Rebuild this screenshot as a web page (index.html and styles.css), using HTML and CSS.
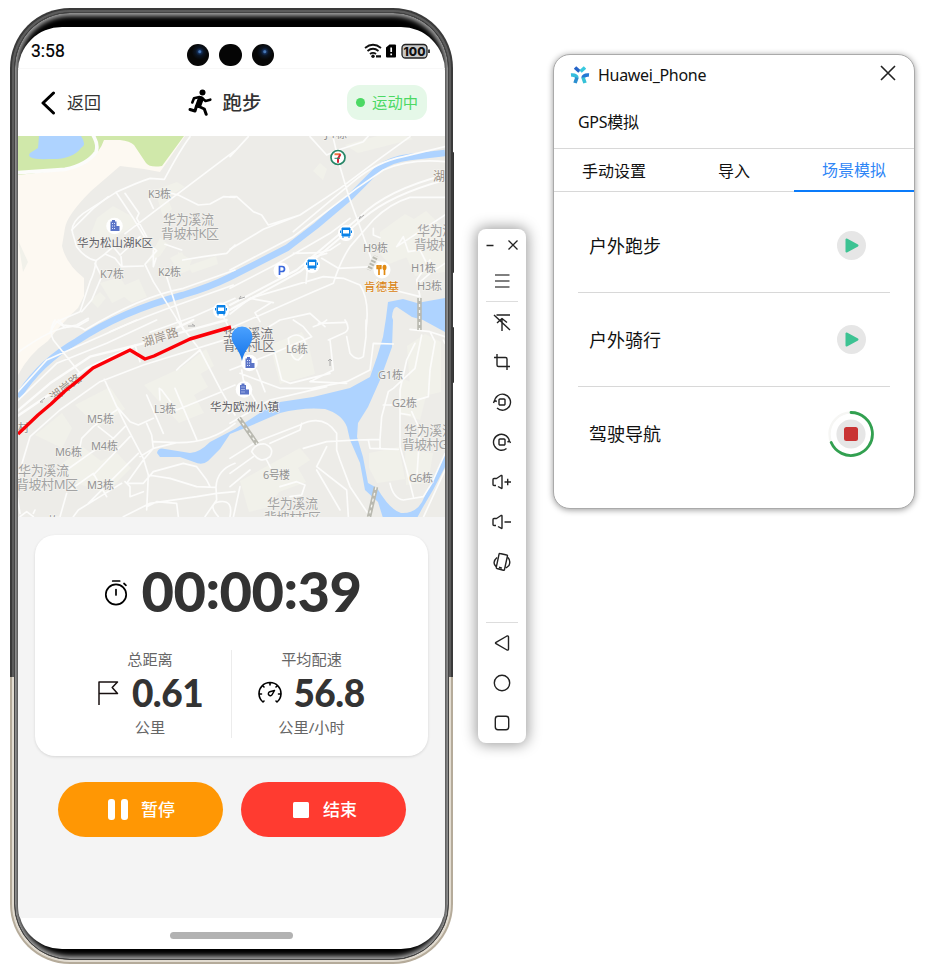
FILE: index.html
```html
<!DOCTYPE html>
<html lang="zh-CN">
<head>
<meta charset="utf-8">
<title>Huawei_Phone</title>
<link rel="stylesheet" href="styles.css">
</head>
<body>
<main class="desk">
  <section class="phone">
    <i class="key key-volume"></i><i class="key key-power"></i>
    <div class="rim"><div class="rim-inner"><div class="bezel">
      <div class="screen">
        <header class="status">
          <span class="clock">3:58</span>
          <span class="cams"><i class="cam lens"></i><i class="cam"></i><i class="cam lens"></i></span>
          <svg class="signals" width="68" height="18" viewBox="0 0 68 18">
            <g fill="none" stroke="#111" stroke-width="1.800">
              <path d="M1 6Q9-.500 17 6M3.500 9Q9 4.500 14.500 9M6 12Q9 9.700 12 12"/>
              <path d="M12 14.300h5" stroke-width="2.200"/>
            </g>
            <circle cx="9" cy="14.300" r="1.700" fill="#111"/>
            <path d="M25.500 2.500h5.500q1 0 1 1v11q0 1-1 1h-8q-1 0-1-1V5.500z" fill="#000"/>
            <path d="M27.200 5.500v4.500M27.200 11.500v1.700" stroke="#fff" stroke-width="1.700"/>
            <rect x="38" y="2.500" width="25" height="13.500" rx="3.500" fill="#c9c9c9" stroke="#222" stroke-width="1.300"/>
            <path d="M65 7.500v3.500" stroke="#222" stroke-width="1.700"/>
            <text x="50.500" y="13.500" class="battery" text-anchor="middle">100</text>
          </svg>
        </header>
        <nav class="nav">
          <span class="back"><svg width="15" height="24" viewBox="0 0 15 24"><path d="M12.500 2L2 12l10.500 10" fill="none" stroke="#000" stroke-width="3" stroke-linecap="round" stroke-linejoin="round"/></svg><span>返回</span></span>
          <span class="title"><svg width="24" height="27" viewBox="0 0 24 27"><circle cx="14.500" cy="3.500" r="3" fill="#000"/><g fill="none" stroke="#000" stroke-linecap="round" stroke-linejoin="round"><path d="M4.300 13.500L6 9.300l5.500-1.300" stroke-width="2.600"/><path d="M14 9L17.500 12l4.800-1.300" stroke-width="2.600"/><path d="M12.700 10L10.500 16" stroke-width="6"/><path d="M11 17.500l5.300 2.500 1.900 5.300" stroke-width="3"/><path d="M8.500 17L7 22 2 20.500" stroke-width="3"/></g></svg><span>跑步</span></span>
          <span class="badge"><i></i><span>运动中</span></span>
        </nav>
        <svg class="map" width="427" height="381" viewBox="18 136 427 381">
          <rect x="18" y="136" width="427" height="381" fill="#edece8"/>
          <path d="M18 136H185L160 172Q140 168 120 166L91 191Q67 215 65 228L62 246Q66 264 84 278V296L78 308Q60 325 48 341Q30 353 18 375Z" fill="#fdf9f2"/>
          <path d="M18 136H184L162 166Q150 168 146 163L134 145Q130 141 120 140L104 140Q96 164 62 170L18 175Z" fill="#d0e8aa"/>
          <path d="M39 136H81Q87 145 81 148Q72 160 49 159Q25 160 30 153L38 148Z" fill="#aed3ff"/>
          <g fill="#f1f1ea">
            <path d="M155 190l22-8 8 5-18 10 5 12-9 8zM97 218l16-12 18 10 6 8-20 12-16 8-12-5zM160 238l8 6-8 12-14 8zM178 252l14 8-4 10-10-6zM188 266l28-10 2 8-26 9zM100 283l20-6 5 8 14-6 8 18-15 6-8-6-12 6zM18 240l10 22-5 10zM90 300l10-8 6 6-8 10zM170 258l12-6 8 18-10 4z"/>
            <path d="M320 163l7 6-4 11-10-9zM345 145l50-14 18 8-55 14zM380 232l25-18 9 5 12-8 19 18v35l-30-10-26 10-9-10zM403 250l25-8 17 10v20l-30 4z"/>
            <path d="M144 385l50-23 14 25-14 8 10 18-25 10zM75 405l35-18 15 22-27 18zM35 435l27-22 10 15-10 20zM58 467l25-20 18 14 16-8 14 15-25 25-30-10zM182 367l24-18 8 17-24 14zM270 345l32-13 7 14 6 28-35 10z"/>
            <path d="M369 453l30-6 6 32-28 4-8-15zM240 481l60-33 10 12-12 8 8 14-27 10-10 15-20 5zM407 346l18-12 16 8v50l-30 7zM400 378l28 10-8 32-20-6zM405 450l28 3-5 30-22 2z"/>
          </g>
          <path d="M18 397Q40 362 77 341C110 319 145 305 183 295Q210 287 230 277L287 248 317 225 350 197 378 169Q391 159 410 157L445 153" fill="none" stroke="#aed3ff" stroke-width="6.500"/>
          <path d="M157 453Q158 447 165 449L190 453Q199 453 210 442L235 429 263 411 280 402 313 397 350 388 370 377 377 357 383 337 386 318 388 302 403 299 417 303 445 298V332L423 320 412 317 397 307Q393 306 392 317L393 320 392 347 380 380 368 407 358 423 357 437 363 457 368 483 377 488Q390 510 401 513 415 514 422 502L437 470 445 452V467L433 490 423 507 417 518H383L378 502 365 490 360 463 350 440 347 427Q342 414 325 409Q303 407 280 413L250 426 230 434 220 449 208 461Q202 466 194 462L180 457H160Z" fill="#aed3ff"/>
          <g fill="none" stroke="#fcfcfb" stroke-linejoin="round" stroke-linecap="round">
            <g transform="translate(10 130) scale(.33333)" stroke-width="5">
              <path d="M20 128L165 118Q230 105 258 66Q266 45 250 17" stroke-width="11"/>
              <path d="M540 20Q510 60 463 148L420 145Q380 158 318 187L220 250Q180 280 188 310L200 350Q225 385 258 392Q255 425 240 455L210 545L140 575L118 610"/>
              <path d="M675 62L345 311M318 187L367 260 416 342 440 362 405 403 430 455 515 590M416 205L430 235M345 190L387 250 380 265M462 185L505 195 565 225 600 222 640 200 675 202M465 343L515 360M518 390L580 380 650 370 675 345M430 360V410L438 385M258 392L285 372 315 385 335 410 400 408M285 372L310 350 330 375 390 320M185 300L250 235 295 200M380 265L410 320M255 400L275 440 245 510 215 545M140 575L165 592 200 585 235 565M336 410L333 380"/>
              <path d="M225 600Q390 500 520 475L675 420M20 670Q170 560 225 600M670 465L530 515Q400 560 300 605M675 505L550 560 420 607M470 440L520 600M640 560L660 600"/>
            </g>
            <g transform="translate(230 130) scale(.33333)" stroke-width="5">
              <path d="M0 80L55 20M240 20L290 75 325 60 400 35 415 18M0 200H20L70 245 95 255 115 285 210 255M0 358L100 298 210 255 330 175 450 85 540 20M310 25L330 110 355 195 390 290 425 390 460 400M0 420L190 320 380 175 460 120Q540 85 645 95M0 475L135 405 300 310 360 265M645 50L520 80Q440 95 370 155L190 305M645 202H540Q480 220 430 270L360 350Q330 395 310 460L240 490 0 595M430 295V315L450 323M645 255L500 350 520 320 535 365 570 360 590 400M600 390L560 450 570 500 490 480 440 450M275 385L325 415 430 410M190 370L270 368 300 360 330 340M228 460L235 385 290 370M120 520L75 548 90 575M0 552L60 505 280 440 340 445 390 465Q420 510 408 600M60 505L130 518M645 400L600 430 565 460M85 610L150 570 240 550 285 590M265 580L350 577"/>
              <path d="M0 525L200 420 390 260Q470 180 645 135M0 540L210 425 400 265Q480 195 645 150" stroke-width="6"/>
            </g>
            <g transform="translate(10 320) scale(.33333)" stroke-width="5">
              <path d="M20 275L120 190 240 110 400 70 550 0M20 290L130 215 230 145 380 75 540 30 650 0" stroke-width="7"/>
              <path d="M20 220L110 120 280 45 380 0M20 245L140 130 290 70 440 0M135 0Q115 30 130 60L210 160M145 0L160 15 200 20 235 0M24 470L60 350 150 270 270 185 400 135 675 50M283 178L320 260 350 320 400 415 415 465 410 570M320 260L360 305 385 315 430 295M320 270L290 290 250 320 215 355 210 380M265 320L310 355 345 320M310 355L240 400 170 450M360 350L250 465M385 400L235 550M375 75L390 125M500 0L570 90 635 215 675 285M635 215L500 270 455 210 448 205 450 240M570 90L510 140 500 150M495 205L560 358M410 225L460 340M410 310L425 345 430 385M350 490L400 420 430 385 500 368Q600 370 675 310M430 365L500 368M345 485L360 500 360 530 400 515M350 490L400 490 430 455 520 430 560 440 590 480 600 500M415 465L480 475 560 500 618 502M675 430Q620 450 618 502L620 540 585 590M340 590L420 550 560 530 620 520 675 515M410 560L440 545 500 550 505 590M625 590Q590 550 630 545 670 540 660 590M30 590L50 575 70 590M70 580L75 570M170 520L150 590M190 590L205 570 270 530 335 490M390 410L430 385M20 520L30 580M180 510L250 460 290 530M640 210L675 195M655 280L675 270"/>
            </g>
            <g transform="translate(230 320) scale(.33333)" stroke-width="5">
              <path d="M0 150L130 100 245 50 220 20 190 0M250 20Q280 10 290 0M300 60L310 150 240 185 350 190M30 160L150 205 245 205 350 185 420 150 430 70 490 72M135 100L155 180 180 190 300 160M175 55Q200 35 220 55 240 90 205 120 180 120 175 55M295 60L340 40Q365 30 345 0M408 0V50L400 110Q380 125 360 100L350 50M0 310L120 240 290 200M35 150L40 180 80 250M80 150L105 215M0 415L80 365 210 315Q280 280 320 340V390L330 420 360 500 420 590M220 385L290 365 380 360 450 358 455 290 475 215 490 205 555 145 575 45M540 28L600 35 645 50M600 35L615 65 600 150 595 230M555 70L530 120 510 210M510 210V380L530 450 550 530M415 360L420 385 505 388M450 358V385M460 255H510L595 230M510 280L540 285M545 275L570 330 560 480M480 490Q490 535 520 540L580 530 605 490 645 400M645 450L580 592M290 380L260 440 350 510 355 590M65 395Q75 370 105 372 135 385 120 410 90 435 65 395M120 370L210 330 215 310M110 420L125 450M0 500L60 450M0 460L70 410M150 500L200 485 225 495 215 525 180 530M260 450L330 570M30 500L10 592M640 60L645 70"/>
            </g>
          </g>
          <g fill="none" stroke="#b9b9b0" stroke-width="4.500"><path d="M419.500 298V330M239 418L257 444M376 487L369 517"/><path d="M376 256l-7 14" stroke-width="5"/></g>
          <g fill="none" stroke="#f4f4ef" stroke-width="1.300" stroke-dasharray="3 3"><path d="M419.500 298V330M239 418L257 444M376 487L369 517"/></g>
          <path d="M376 256l-7 14" stroke="#edece8" stroke-width="6" stroke-dasharray="1.500 2"/>
          <path d="M359 219l5-4m-5 4l1.500-3M239 299l6-2m-6 2l2-3M188 326h7m-3-2 3 2M40 402l5-4m-5 4h3M330 366v-7m-2 2 2-2 2 2" stroke="#aaa" fill="none"/>
          <g class="lbl">
            <text x="148" y="198" textLength="23">K3栋</text><text x="100" y="278" textLength="24">K7栋</text><text x="158" y="276" textLength="23">K2栋</text>
            <text x="363" y="252" textLength="25">H9栋</text><text x="411" y="272" textLength="25">H1栋</text><text x="417" y="290" textLength="25">H3栋</text>
            <text x="286" y="353" textLength="22">L6栋</text><text x="154" y="413" textLength="22">L3栋</text><text x="87" y="423" textLength="27">M5栋</text>
            <text x="91" y="450" textLength="27">M4栋</text><text x="55" y="456" textLength="27">M6栋</text><text x="87" y="489" textLength="27">M3栋</text>
            <text x="378" y="379" textLength="25">G1栋</text><text x="392" y="407" textLength="25">G2栋</text><text x="409" y="482" textLength="24">G6栋</text>
            <text x="263" y="479" textLength="27">6号楼</text><text x="325" y="138" textLength="22">J4栋</text>
            <text x="18" y="432">村</text><text x="48" y="525">栋</text>
          </g>
          <g class="area">
            <text x="163" y="224" textLength="51">华为溪流</text><text x="161" y="238" textLength="58">背坡村K区</text>
            <text x="417" y="235" textLength="51">华为溪流</text><text x="414" y="249" textLength="58">背坡村H区</text>
            <text x="18" y="475" textLength="51">华为溪流</text><text x="16" y="489" textLength="62">背坡村M区</text>
            <text x="404" y="435" textLength="51">华为溪流</text><text x="402" y="449" textLength="58">背坡村G区</text>
            <text x="267" y="508" textLength="51">华为溪流</text><text x="264" y="522" textLength="57">背坡村F区</text>
          </g>
          <g class="area strong"><text x="223" y="338" textLength="50">华为溪流</text><text x="223" y="350" textLength="52">背坡村L区</text></g>
          <g class="road"><text transform="translate(144 347) rotate(-18)" textLength="37">湖岸路</text><text transform="translate(54 402) rotate(-38)" textLength="36">湖岸路</text><text x="433" y="181">湖</text></g>
          <path d="M18 434L38 415 51 404 65 391 80 379 93 368 130 350 145 359 154 356 190 339 231 327" fill="none" stroke="#fb0007" stroke-width="3.400" stroke-linejoin="round"/>
          <g class="place"><text x="77" y="247" textLength="76">华为松山湖K区</text><text x="210" y="410.500" textLength="69">华为欧洲小镇</text></g>
          <text x="364" y="290.500" class="food" textLength="35">肯德基</text>
          <defs>
            <g id="bus"><circle r="8" fill="#fff"/><path d="M-4-5h8v8h-8zM-5.500-2.500v2.500M5.500-2.500v2.500M-3 3.500v1.500M3 3.500v1.500" fill="#0b82e8" stroke="#0b82e8" stroke-width="1"/><path d="M-3-3h6v3.500h-6z" fill="#fff"/></g>
            <g id="tower"><circle r="8.300" fill="#fff"/><path d="M-4 5V-4.500h1.500V-6h3v1.500H2V0h3v5z" fill="#5b74c7"/><path d="M-2.500-2.500h1m1 0h1M-2.500 0h1m1 0h1m-3 2.500h1m1 0h1" stroke="#dfe6ff" stroke-width="1.200"/></g>
            <linearGradient id="pinfill" x2="0" y2="1"><stop stop-color="#4aa1ff"/><stop offset="1" stop-color="#1674e8"/></linearGradient>
          </defs>
          <use href="#bus" x="346" y="233"/><use href="#bus" x="312" y="265"/><use href="#bus" x="221" y="310.500"/>
          <use href="#tower" x="114.500" y="226"/><use href="#tower" x="249.500" y="363"/><use href="#tower" x="244" y="389.500"/>
          <circle cx="281.500" cy="270.500" r="8" fill="#fff"/><path d="M279.500 275v-8.500h2.500a2.500 2.500 0 0 1 0 5h-2.500" fill="none" stroke="#3968dc" stroke-width="1.700"/>
          <circle cx="382" cy="270" r="8.500" fill="#fff"/><path d="M379 265v10M377.200 265v3.500h3.600V265M384.500 265.500v9.500" fill="none" stroke="#e28a12" stroke-width="1.700"/><ellipse cx="384.500" cy="267.500" rx="2" ry="2.800" fill="#e28a12"/>
          <circle cx="338" cy="157.500" r="7" fill="#fff" stroke="#278667" stroke-width="1.700"/><path d="M334.500 154.300h6" fill="none" stroke="#ee7440" stroke-width="2"/><path d="M340.500 154.300l-2.500 4.200v4.200" fill="none" stroke="#d42337" stroke-width="2"/><path d="M334.500 158.300h5.500" stroke="#278667" stroke-width="1"/>
          <path d="M242 361C240 350 231.500 344 231.500 337a10.500 10.500 0 0 1 21 0C252.500 344 244 350 242 361Z" fill="url(#pinfill)"/>
        </svg>
        <section class="content">
          <article class="card">
            <div class="timer"><svg width="24" height="27" viewBox="0 0 24 27" fill="none" stroke="#000" stroke-width="1.700" stroke-linecap="round"><circle cx="12" cy="15.500" r="10.200"/><path d="M12 10.500v5.500M8.700 2h7M20 4.500l2 1.800"/></svg><b>00<i>:</i>00<i>:</i>39</b></div>
            <div class="stats">
              <div class="stat"><span>总距离</span><div class="value"><svg width="22" height="26" viewBox="0 0 22 26" fill="none" stroke="#181010" stroke-width="1.500" stroke-linejoin="round"><path d="M2 25V2h18.500l-5.300 5.500 5.300 6H2"/></svg><b>0.61</b></div><span>公里</span></div>
              <div class="stat"><span>平均配速</span><div class="value"><svg width="24" height="24" viewBox="0 0 24 24" fill="none" stroke="#000" stroke-width="1.600" stroke-linecap="round"><path d="M5 21A11 11 0 1 1 19 21M12 1.500v2.500M4.500 4.500l1.500 1.500M19.500 4.500l-1.500 1.500M1.500 13H3.500M22.500 13H20.500M5 21l1-1M19 21l-1-1"/><path d="M16.500 9.500l-4.700 1.300a2 2 0 1 0 2.400 2.700z" stroke-width="1.500" stroke-linejoin="round"/></svg><b>56.8</b></div><span>公里/小时</span></div>
            </div>
          </article>
          <div class="actions">
            <button class="pause"><svg width="20" height="21" viewBox="0 0 20 21" fill="#fff"><rect width="7" height="21" rx="3"/><rect x="13" width="7" height="21" rx="3"/></svg><span>暂停</span></button>
            <button class="stop"><svg width="16" height="16"><rect width="16" height="16" rx="1.500" fill="#fff"/></svg><span>结束</span></button>
          </div>
        </section>
        <footer class="home"><i></i></footer>
      </div>
    </div></div></div>
  </section>

  <aside class="tools">
    <div class="window-buttons"><svg width="8" height="12"><path d="M.500 6.500h7" stroke="#222" stroke-width="1.500"/></svg><svg width="12" height="12"><path d="M1.500 1.500l9 9M10.500 1.500l-9 9" stroke="#222" stroke-width="1.300"/></svg></div>
    <svg class="tool menu" viewBox="-12 -12 24 24"><path d="M-7-6H7.500M-7 0H7.500M-7 6H7.500"/></svg>
    <hr>
    <svg class="tool" viewBox="-12 -12 24 24"><path d="M-5.500-7H8M-8-7L8 8M0-3.500V9M-5 1L0-3.500 5 .500"/></svg>
    <svg class="tool" viewBox="-12 -12 24 24"><path d="M-8-4.500H3.500Q5-4.500 5-3V8M-5-8V3q0 1.500 1.500 1.500H8"/></svg>
    <svg class="tool" viewBox="-12 -12 24 24"><path d="M-7.500 0A8 8 0 1 1-5 6M-8.500 1l1-2.500 2.300 1"/><rect x="-3" y="-3" width="6" height="6" rx="1"/></svg>
    <svg class="tool" viewBox="-12 -12 24 24"><path d="M4.500 6.500A8 8 0 1 1 7.500 0M8.500 1L7.500-1 5.500 0"/><rect x="-3" y="-3" width="6" height="6" rx="1"/></svg>
    <svg class="tool" viewBox="-12 -12 24 24"><path d="M-6 3.500h-2q-1 0-1-1v-5q0-1 1-1h2.500L-1-6.500Q0-6.800 0-6V6Q0 6.800-1 6.200L-4 4.500M2.500 0H9M5.700-3.200v6.400"/></svg>
    <svg class="tool" viewBox="-12 -12 24 24"><path d="M-6 3.500h-2q-1 0-1-1v-5q0-1 1-1h2.500L-1-6.500Q0-6.800 0-6V6Q0 6.800-1 6.200L-4 4.500M2.500 0H9"/></svg>
    <svg class="tool" viewBox="-12 -12 24 24"><path d="M-2-8.500L4.700-7Q5.700-6.800 5.400-5.800L2.500 7.500Q2.300 8.500 1.300 8.200L-5 6.500Q-6 6.200-5.700 5.200L-3-7.700Q-2.800-8.700-2-8.500M-3 5.300l3 .800M-5-4.500Q-9-1-7.500 2.500L-6 4.500M6-4.500Q9-1 7 3.500L4 6"/></svg>
    <hr class="low">
    <svg class="tool" viewBox="-12 -12 24 24"><path d="M-6 .700Q-7 0-6-.700L5-7Q6.500-7.500 6.500-6V6Q6.500 7.500 5 7Z"/></svg>
    <svg class="tool" viewBox="-12 -12 24 24"><circle r="7.700"/></svg>
    <svg class="tool" viewBox="-12 -12 24 24"><rect x="-6.700" y="-6.700" width="13.400" height="13.400" rx="2.700"/></svg>
  </aside>

  <section class="panel">
    <header class="panel-head">
      <svg width="20" height="18" viewBox="0 0 20 18" fill="none" stroke-width="3.600"><path d="M9.500 5.500L5 1.500" stroke="#2564c8"/><path d="M10.500 5.500L15 1.500" stroke="#38c9df"/><path d="M1 9Q6.500 8.500 7 12" stroke="#36bddd"/><path d="M7 11.500L5 17" stroke="#2b8fd0"/><path d="M19 9Q13.500 8.500 13 12" stroke="#2479d4"/><path d="M13 11.500L15 17" stroke="#35c1d7"/></svg>
      <span>Huawei_Phone</span>
      <svg class="close" width="16" height="16"><path d="M1 1l14 14M15 1L1 15" stroke="#222" stroke-width="1.600"/></svg>
    </header>
    <h1>GPS模拟</h1>
    <nav class="tabs"><span>手动设置</span><span>导入</span><span class="active">场景模拟</span></nav>
    <ul>
      <li><span class="name">户外跑步</span><span class="round"><svg width="14" height="15"><path d="M1.500 1.500v12l11-6z" fill="#3dc393" stroke="#3dc393" stroke-width="2" stroke-linejoin="round"/></svg></span></li>
      <li><span class="name">户外骑行</span><span class="round"><svg width="14" height="15"><path d="M1.500 1.500v12l11-6z" fill="#3dc393" stroke="#3dc393" stroke-width="2" stroke-linejoin="round"/></svg></span></li>
      <li><span class="name">驾驶导航</span><svg class="progress" width="46" height="46" viewBox="-23 -23 46 46"><circle r="21.500" fill="none" stroke="#f6f6f4" stroke-width="2.400"/><circle r="14.600" fill="#e6e6e6"/><path d="M0-21.500A21.500 21.500 0 1 1-19.800 8.500" fill="none" stroke="#32a050" stroke-width="2.800" stroke-linecap="round"/><rect x="-7" y="-7" width="14" height="14" rx="2.500" fill="#c93434"/></svg></li>
    </ul>
  </section>
</main>
</body>
</html>
```
FILE: styles.css
```css
* { box-sizing: border-box; }
body { margin: 0; background: #fff; font-family: "Noto Sans", "Noto Sans CJK SC", sans-serif; color: #333; overflow: hidden; }
.desk { display: flex; align-items: flex-start; width: 928px; height: 970px; padding: 8px 0 0 10px; }
svg { display: block; flex: none; }

/* Device */
.phone { position: relative; width: 443px; height: 956px; flex: none; }
.key { position: absolute; right: -1px; width: 2px; background: #333; border-radius: 1px; }
.key-volume { top: 144px; height: 121px; }
.key-power { top: 319px; height: 56px; }
.rim { position: relative; height: 100%; padding: 2px; border-radius: 60px; background: linear-gradient(#3a3a3a 669px, #b5ab9a 669px); }
.rim-inner { height: 100%; padding: 2px; border-radius: 58px; background: linear-gradient(#5c5c5c 667px, #e2dcd1 667px); }
.bezel { height: 100%; padding: 14px 3px 10px; border: 1px solid #444; border-radius: 56px; background: #000; box-shadow: inset 0 0 5px 3px #a8a8a8; }
.screen { display: flex; flex-direction: column; height: 922px; width: 427px; overflow: hidden; border-radius: 44px; background: #fff; }

.status { display: grid; grid-template-columns: 1fr auto 1fr; align-items: center; height: 42px; padding: 7px 13px 0; border-bottom: 1px solid #f8f8f8; }
.clock { font: 400 17.500px Roboto, sans-serif; color: #000; -webkit-text-stroke: .2px #000; }
.cams { display: flex; gap: 10px; padding: 8px 2px 0 0; }
.cam { width: 22.500px; height: 22.500px; border-radius: 50%; background: #050505; }
.lens { background: radial-gradient(circle at 58% 35%, #4878b5 0 1px, #142f5a 2px, #0b1524 4px, #070707 8px); }
.signals { justify-self: end; margin: 0 0 0 0; }
.battery { font: 800 12px Inter, sans-serif; fill: #111; }

.nav { display: grid; grid-template-columns: 1fr auto 1fr; align-items: center; height: 67px; padding: 0 18px 0 23px; }
.back { display: flex; align-items: center; gap: 11px; font-size: 17px; }
.back span, .title span, .badge span, button span, .name { margin-top: -2px; }
.title { display: flex; align-items: center; gap: 10px; margin-right: 18px; font-size: 19.500px; font-weight: 500; font-family: "Noto Sans CJK SC", sans-serif; }
.badge { justify-self: end; display: flex; align-items: center; gap: 7px; height: 35px; padding: 0 9px; border-radius: 13px; background: #e5f8e8; color: #4cd964; font-size: 15.300px; line-height: 36px; }
.badge i { width: 9px; height: 9px; border-radius: 50%; background: #4cd964; }

/* Map labels */
.map text { font-family: "Noto Sans", "Noto Sans CJK SC", sans-serif; stroke: #f4f3ef; stroke-width: 1.500px; paint-order: stroke; }
.map .lbl text { font-size: 11px; fill: #929292; }
.map .area text { font-size: 13px; fill: #a3a3a3; }
.map .strong text { font-size: 12.800px; fill: #77777c; }
.map .road text { font-size: 12px; fill: #9b9187; }
.map .place text { font-size: 11.500px; fill: #606066; }
.map .food { font-size: 11.500px; fill: #d9820f; }

.content { height: 401px; padding: 18px 17px 0; background: #f4f4f4; }
.card { height: 221px; padding-top: 25px; border-radius: 20px; background: #fff; box-shadow: 0 1px 3px rgba(0, 0, 0, .12); }
.timer { display: flex; align-items: center; justify-content: center; gap: 13px; height: 64px; padding: 0 0 0 3px; }
.timer b { margin-top: -3px; font: 900 56px/64px Lato, sans-serif; letter-spacing: -.500px; }
.timer b i { font-style: normal; line-height: 0; vertical-align: 3px; }
.stats { display: grid; grid-template-columns: 161px 1fr; margin: 26px 35px 0; height: 88px; }
.stat { display: flex; flex-direction: column; align-items: center; padding-right: 1px; font-size: 15.200px; line-height: 18px; color: #666; }
.stat + .stat { padding-right: 2px; border-left: 1px solid #ececec; }
.value { display: flex; align-items: center; gap: 13px; height: 50px; color: #333; }
.value b { font: 900 37px/50px Lato, sans-serif; letter-spacing: -.5px; }
.stat + .stat .value { gap: 11px; }
.actions { display: grid; grid-template-columns: 165px 165px; gap: 17.500px; padding: 26px 0 0 23px; }
button { display: flex; align-items: center; justify-content: center; height: 55px; padding: 0; border: 0; border-radius: 28px; color: #fff; font: 500 17px "Noto Sans CJK SC", sans-serif; }
.pause { gap: 13px; padding-left: 2px; background: #ff9704; }
.stop { gap: 14px; padding-left: 4px; background: #ff3b30; }
.home { display: flex; align-items: center; justify-content: center; height: 31px; padding-top: 3px; }
.home i { width: 123px; height: 7px; border-radius: 4px; background: #b2b2b2; }

/* Emulator toolbar */
.tools { display: flex; flex-direction: column; align-items: center; width: 48px; height: 514px; margin: 221px 0 0 25px; border-radius: 8px; background: #fff; box-shadow: 0 0 14px 2px rgba(0, 0, 0, .38); flex: none; }
.window-buttons { display: flex; align-items: center; gap: 13px; height: 32px; padding-left: 0; }
.tool { width: 24px; height: 24px; margin: 8px 0; fill: none; stroke: #222; stroke-width: 1.400; stroke-linejoin: round; }
.menu path { stroke: #555; }
hr { width: 32px; height: 1px; margin: 0; border: 0; background: #ddd; flex: none; }
.low { margin-top: 40px; }

/* Simulation panel */
.panel { width: 362px; height: 455px; margin: 46px 0 0 27px; border: 1px solid #aaa; border-radius: 17px; box-shadow: 0 1px 6px rgba(0, 0, 0, .4); background: #fff; color: #111; flex: none; overflow: hidden; }
.panel-head { display: flex; align-items: center; height: 40px; padding: 0 18px 0 16px; font: 16px "Noto Sans", sans-serif; }
.panel-head span { margin-left: 8px; letter-spacing: -.3px; }
.close { margin: -4px 0 0 auto; }
h1 { height: 54px; margin: 0; padding-left: 24px; font-size: 16px; line-height: 54px; font-weight: 400; border-bottom: 1px solid #d8d8d8; letter-spacing: -.3px; }
.tabs { display: grid; grid-template-columns: repeat(3, 120px); height: 43px; border-bottom: 1px solid #d8d8d8; font-size: 16px; line-height: 44px; text-align: center; }
.tabs .active { height: 43px; color: #2f86f6; line-height: 42px; border-bottom: 2px solid #0a7bfa; }
ul { margin: 7px 24px 0; padding: 0; list-style: none; }
li { display: flex; align-items: center; justify-content: space-between; height: 94px; padding: 0 24px 0 11px; font-size: 18px; border-bottom: 1px solid #d8d8d8; }
li:last-child { border: 0; }
.round { display: flex; align-items: center; justify-content: center; width: 29px; height: 29px; border-radius: 50%; background: #e6e6e6; }
.progress { margin-right: -8px; }
```
